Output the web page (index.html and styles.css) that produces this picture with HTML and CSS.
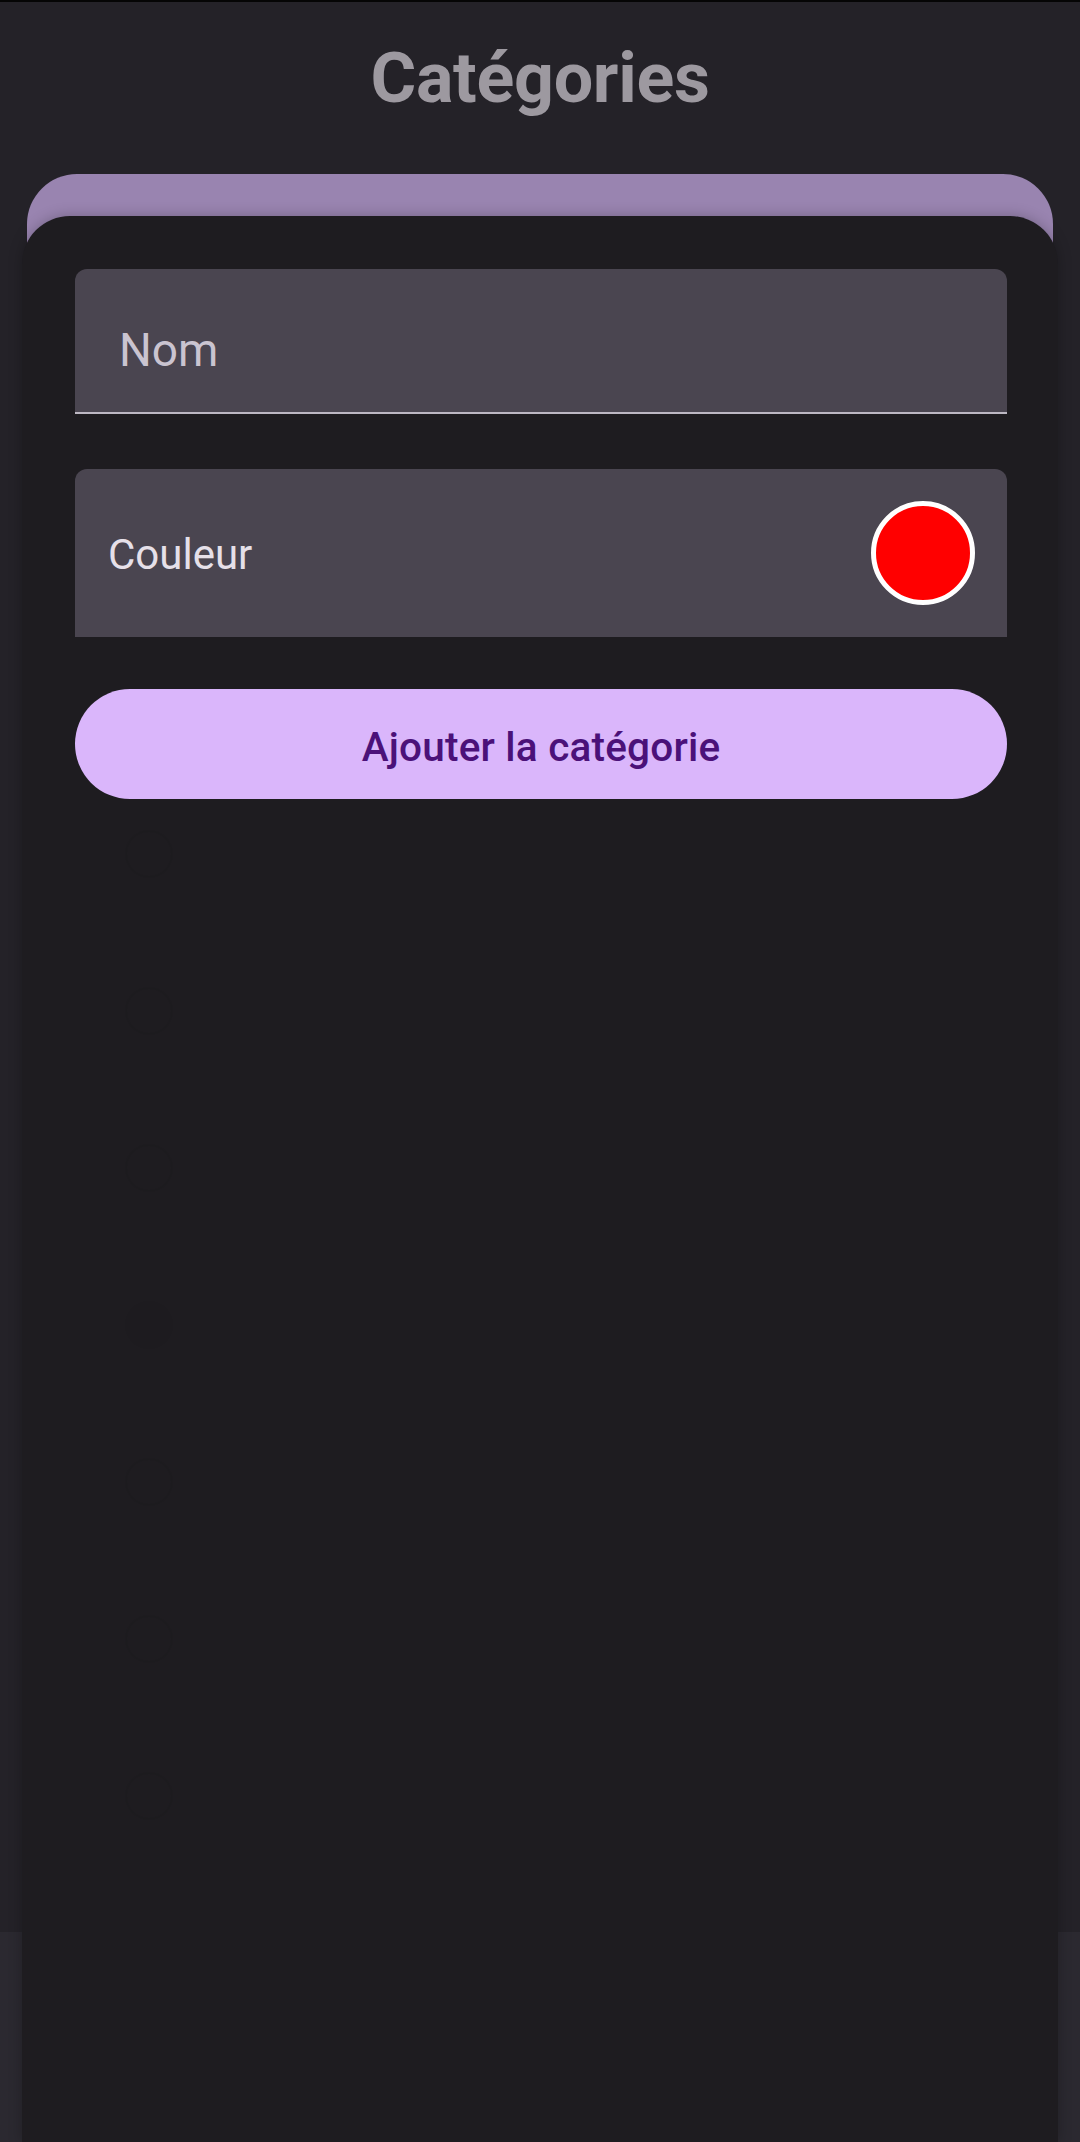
FILE: index.html
```html
<!DOCTYPE html>
<html lang="fr">
<head>
<meta charset="utf-8">
<title>Catégories</title>
<link rel="stylesheet" href="styles.css">
</head>
<body>
<div class="screen">
  <div class="status-strip"></div>
  <header class="topbar">
    <h1 class="title">Catégories</h1>
  </header>
  <main class="page">
    <div class="card-under"></div>
  </main>
  <div class="navbar"></div>

  <section class="sheet">
    <div class="field field-name">
      <span class="label-nom">Nom</span>
    </div>
    <div class="field field-color">
      <span class="label-couleur">Couleur</span>
      <span class="swatch"></span>
    </div>
    <button class="add-btn" type="button">Ajouter la catégorie</button>
    <div class="ghosts">
      <span class="ghost"></span>
      <span class="ghost"></span>
      <span class="ghost"></span>
      <span class="ghost ghost-fill"></span>
      <span class="ghost"></span>
      <span class="ghost"></span>
      <span class="ghost"></span>
    </div>
  </section>
</div>
</body>
</html>
```

FILE: styles.css
```css
* { box-sizing: border-box; }

html, body {
  margin: 0;
  padding: 0;
  background: #242228;
}

body {
  font-family: Roboto, "Noto Sans", "Liberation Sans", sans-serif;
  width: 1080px;
  height: 2142px;
  overflow: hidden;
}

.screen {
  position: relative;
  width: 1080px;
  height: 2142px;
  display: flex;
  flex-direction: column;
  background: #242228;
}

.status-strip {
  height: 2px;
  background: #050505;
  flex: none;
}

.topbar {
  flex: none;
  padding-top: 35px;
  height: 172px;
  display: flex;
  justify-content: center;
}

.title {
  margin: 0;
  font-size: 70px;
  line-height: 82px;
  font-weight: 700;
  color: #9d99a0;
  letter-spacing: -0.3px;
}

.page {
  flex: 1;
  padding: 0 27px;
}

.card-under {
  height: 260px;
  background: #9984b0;
  border-radius: 50px;
}

.navbar {
  flex: none;
  height: 210px;
  background: #2b2930;
}

/* bottom sheet overlaying the page */
.sheet {
  position: absolute;
  top: 216px;
  left: 22px;
  right: 22px;
  bottom: 0;
  background: #1e1c20;
  border-radius: 48px 48px 0 0;
  padding: 53px 51px 0 53px;
  display: flex;
  flex-direction: column;
  box-shadow: 0 0 14px rgba(0, 0, 0, 0.25);
}

.field {
  background: #4a4550;
  border-radius: 12px 12px 0 0;
}

.field-name {
  height: 145px;
  border-bottom: 2px solid #bdb8c3;
  padding: 54px 0 0 44px;
}

.label-nom {
  display: block;
  font-size: 46px;
  line-height: 54px;
  color: #cac4d0;
}

.field-color {
  margin-top: 55px;
  height: 168px;
  display: flex;
  align-items: center;
  justify-content: space-between;
  padding: 2px 32px 0 33px;
}

.label-couleur {
  font-size: 42px;
  line-height: 49px;
  color: #e6e0e9;
}

.swatch {
  width: 104px;
  height: 104px;
  border-radius: 50%;
  background: #ff0000;
  border: 5px solid #ffffff;
  margin-top: -2px;
}

.add-btn {
  margin-top: 52px;
  height: 110px;
  border: none;
  border-radius: 55px;
  background: #dab6fb;
  color: #4b1179;
  font-family: Roboto, "Noto Sans", "Liberation Sans", sans-serif;
  font-size: 40.5px;
  font-weight: 500;
  line-height: 47px;
  padding: 6px 0 0 0;
  letter-spacing: 0.2px;
}

.ghosts {
  margin-top: 31px;
  padding-left: 50px;
  display: flex;
  flex-direction: column;
  gap: 109px;
}

.ghost {
  display: block;
  width: 48px;
  height: 48px;
  border-radius: 50%;
  border: 2px solid rgba(0, 0, 0, 0.035);
}

.ghost-fill {
  background: rgba(0, 0, 0, 0.03);
  border-color: transparent;
}
```
